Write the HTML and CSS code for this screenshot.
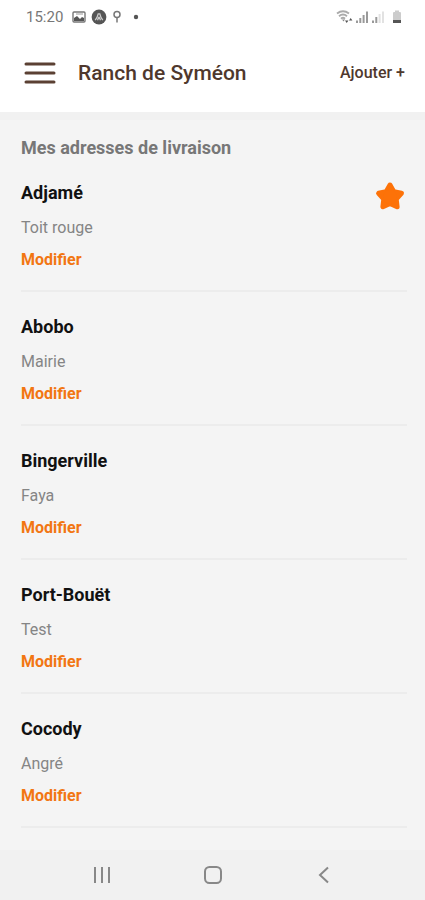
FILE: index.html
```html
<!DOCTYPE html>
<html lang="fr">
<head>
<meta charset="utf-8">
<meta name="viewport" content="width=device-width, initial-scale=1">
<title>Ranch de Syméon</title>
<link rel="stylesheet" href="styles.css">
</head>
<body>
<div class="status">
  <div class="status-left">
    <span class="clock">15:20</span>
    <svg width="14" height="12" viewBox="0 0 14 12"><rect x="1" y="1" width="12" height="10" rx="1" fill="none" stroke="#777" stroke-width="1.4"/><path d="M2 10V7l3-2 3 3 2-2 2 1v3z" fill="#555"/><path d="M4 3h7" stroke="#999"/></svg>
    <svg width="16" height="16" viewBox="0 0 16 16"><circle cx="8" cy="8" r="7.400" fill="#555"/><path d="M4.200 11.200C6 9 6.800 6.500 7.200 4.800h1.600c.4 1.700 1.200 4.200 3 6.400M8 7.800l1.500 3.400M8 7.800l-1.500 3.400" fill="none" stroke="#ccc" stroke-width="1.300"/></svg>
    <svg class="pin" width="10" height="14" viewBox="0 0 10 14"><circle cx="5" cy="4.500" r="3" fill="none" stroke="#777" stroke-width="1.500"/><path d="M5 7.500V12.500" stroke="#777" stroke-width="1.500"/></svg>
    <svg width="6" height="6" viewBox="0 0 6 6"><circle cx="3" cy="3" r="2.200" fill="#555"/></svg>
  </div>
  <div class="status-right">
    <svg width="17" height="14" viewBox="0 0 17 14"><path d="M1 3.500Q7 -1 13 3.500M3 6.200Q7 3 11 6.200M5 8.700Q7 7 9 8.700" fill="none" stroke="#aaa" stroke-width="1.900"/><path d="M6 9.500h3l-1.500 2z" fill="#888"/><path d="M9 10.500h3.400l-1.700 2.500zM13 10.500l1.700-2.500 1.700 2.500z" fill="#555"/></svg>
    <svg width="14" height="14" viewBox="0 0 14 14"><path d="M2 10.500V13M5.300 8v5M8.600 5v8M12 1.500V13" stroke="#999" stroke-width="2"/></svg>
    <svg width="14" height="14" viewBox="0 0 14 14"><path d="M2 10.500V13M5.300 7v6" stroke="#999" stroke-width="2"/><path d="M8.600 4v9M12 1.500V13" stroke="#e2e2e2" stroke-width="2"/></svg>
    <svg class="battery" width="10" height="14" viewBox="0 0 10 14"><path d="M1 3Q1 2 2 2h1V.5h4V2h1q1 0 1 1v10H1z" fill="#ccc"/><path d="M1 10h8v3H1z" fill="#555"/></svg>
  </div>
</div>
<header class="header">
  <button class="menu" type="button" aria-label="Menu"><svg width="32" height="24" viewBox="0 0 32 24"><path d="M2 3h28M2 12h28M2 21h28" stroke="#5b4033" stroke-width="3" stroke-linecap="round"/></svg></button>
  <h1 class="title">Ranch de Syméon</h1>
  <button class="add" type="button">Ajouter +</button>
</header>
<main class="main">
  <h2 class="heading">Mes adresses de livraison</h2>
  <ul class="list">
    <li class="item"><div><h3 class="name">Adjamé</h3><p class="detail">Toit rouge</p><a class="edit" href="#">Modifier</a></div>
      <svg class="star" width="30" height="30" viewBox="0 0 30 30"><path d="M15 4L18.800 10.700L26.400 12.300L21.200 18L22.100 25.700L15 22.500L7.900 25.700L8.800 18L3.600 12.300L11.200 10.700Z" fill="#fd7208" stroke="#fd7208" stroke-width="5" stroke-linejoin="round"/><circle cx="15" cy="16" r="7" fill="#fd7208"/></svg></li>
    <li class="item"><div><h3 class="name">Abobo</h3><p class="detail">Mairie</p><a class="edit" href="#">Modifier</a></div></li>
    <li class="item"><div><h3 class="name">Bingerville</h3><p class="detail">Faya</p><a class="edit" href="#">Modifier</a></div></li>
    <li class="item"><div><h3 class="name">Port-Bouët</h3><p class="detail">Test</p><a class="edit" href="#">Modifier</a></div></li>
    <li class="item"><div><h3 class="name">Cocody</h3><p class="detail">Angré</p><a class="edit" href="#">Modifier</a></div></li>
  </ul>
</main>
<nav class="nav">
  <button type="button" aria-label="Applications récentes"><svg width="20" height="20" viewBox="0 0 20 20"><path d="M3 2v16M10 2v16M17 2v16" stroke="#888" stroke-width="2"/></svg></button>
  <button type="button" aria-label="Accueil"><svg width="20" height="20" viewBox="0 0 20 20"><rect x="2" y="2" width="16" height="16" rx="4.500" fill="none" stroke="#888" stroke-width="2"/></svg></button>
  <button type="button" aria-label="Retour"><svg width="20" height="20" viewBox="0 0 20 20"><path d="M14 2.500L6 10l8 7.500" fill="none" stroke="#888" stroke-width="2"/></svg></button>
</nav>
</body>
</html>
```
FILE: styles.css
```css
* { box-sizing: border-box; }
body {
  margin: 0;
  min-height: 100vh;
  display: flex;
  flex-direction: column;
  background: #f4f4f4;
  color: #111;
  font-family: Roboto, "Liberation Sans", sans-serif;
}
h1, h2, h3, p, ul { margin: 0; padding: 0; }
button { border: 0; padding: 0; background: none; font: inherit; color: inherit; }
svg { display: block; }
.status {
  display: flex;
  justify-content: space-between;
  align-items: center;
  height: 34px;
  padding: 0 23px 0 26px;
  background: #fff;
}
.status-left, .status-right { display: flex; align-items: center; }
.status-left { gap: 5px; }
.status-right { gap: 2px; }
.clock { margin-right: 4px; font-size: 15px; line-height: 20px; color: #777; }
.pin { margin-right: 6px; }
.battery { margin-left: 5px; }
.header {
  display: flex;
  align-items: center;
  height: 78px;
  padding: 0 20px 0 24px;
  background: #fff;
  color: #4f382d;
}
.title { flex: 1; margin-left: 22px; font-size: 21px; line-height: 24px; font-weight: 500; }
.add { font-size: 16px; line-height: 20px; font-weight: 500; }
.main { flex: 1; padding: 18px 18px 20px 21px; border-top: 8px solid #f1f1f1; }
.heading { font-size: 18px; line-height: 20px; font-weight: 700; color: #777; }
.list { list-style: none; }
.item {
  display: flex;
  justify-content: space-between;
  align-items: flex-start;
  padding: 23px 0 20px;
  border-bottom: 2px solid #ececec;
}
.name { font-size: 18px; line-height: 24px; font-weight: 700; }
.detail { margin: 13px 0 12px; font-size: 16px; line-height: 20px; color: #858585; }
.edit { display: block; font-size: 16px; line-height: 20px; font-weight: 700; color: #f27612; text-decoration: none; }
.star { margin-right: 2px; }
.nav {
  display: grid;
  grid-template-columns: repeat(3, 1fr);
  height: 50px;
  padding: 0 46px;
  background: #f1f1f1;
}
.nav button { display: grid; place-items: center; }
```
